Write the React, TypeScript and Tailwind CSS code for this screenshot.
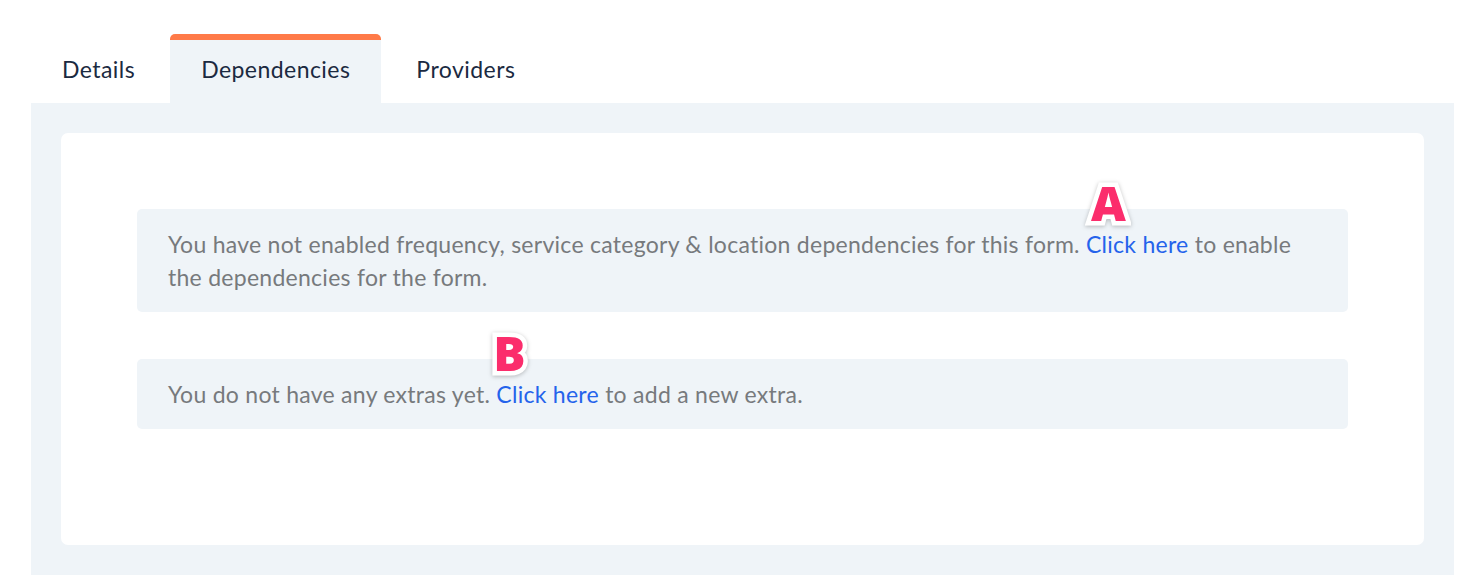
import React from 'react';

const Marker: React.FC<{ label: string; className: string }> = ({ label, className }) => (
  <span
    className={`absolute font-black text-[48px] leading-none text-[#fb2d6c] [paint-order:stroke_fill] [-webkit-text-stroke:9px_#ffffff] drop-shadow-[0_1px_2px_rgba(0,0,0,0.25)] select-none ${className}`}
    style={{ fontFamily: '"Open Sans", sans-serif' }}
  >
    {label}
  </span>
);

const App: React.FC = () => {
  const tabs = ['Details', 'Dependencies', 'Providers'];

  return (
    <div className="w-[1470px] h-[588px] bg-white pt-[34px] font-['Lato',sans-serif]">
      {/* Tab bar */}
      <div className="flex gap-[4px] pl-[31px] h-[69px]">
        {tabs.map((t) =>
          t === 'Dependencies' ? (
            <div
              key={t}
              className="flex items-center px-[31px] bg-[#eff4f8] border-t-[6px] border-[#ff7a48] rounded-t-[5px] text-[23px] tracking-[0.45px] text-[#1b2a41] pb-[4px]"
            >
              {t}
            </div>
          ) : (
            <div key={t} className="flex items-center px-[31px] pt-[2px] text-[23px] tracking-[0.45px] text-[#1b2a41]">
              {t}
            </div>
          )
        )}
      </div>

      {/* Panel */}
      <div className="mx-[31px] mr-[16px] bg-[#eff4f8] p-[30px]">
        <div className="bg-white rounded-[7px] px-[76px] pt-[76px] pb-[116px] flex flex-col gap-[47px]">
          <div className="relative bg-[#eff4f8] rounded-[5px] px-[31px] py-[18.5px] text-[23px] tracking-[0.27px] leading-[33px] text-[#777a7d]">
            You have not enabled frequency, service category &amp; location dependencies for this form.{' '}
            <span className="relative text-[#2563eb]">
              Click here
              <Marker label="A" className="left-[5px] -top-[51px]" />
            </span>{' '}
            to enable the dependencies for the form.
          </div>
          <div className="relative bg-[#eff4f8] rounded-[5px] px-[31px] py-[18.5px] text-[23px] tracking-[0.27px] leading-[33px] text-[#777a7d]">
            You do not have any extras yet.{' '}
            <span className="relative text-[#2563eb]">
              Click here
              <Marker label="B" className="-left-[3px] -top-[51px]" />
            </span>{' '}
            to add a new extra.
          </div>
        </div>
      </div>
    </div>
  );
};

export default App;
